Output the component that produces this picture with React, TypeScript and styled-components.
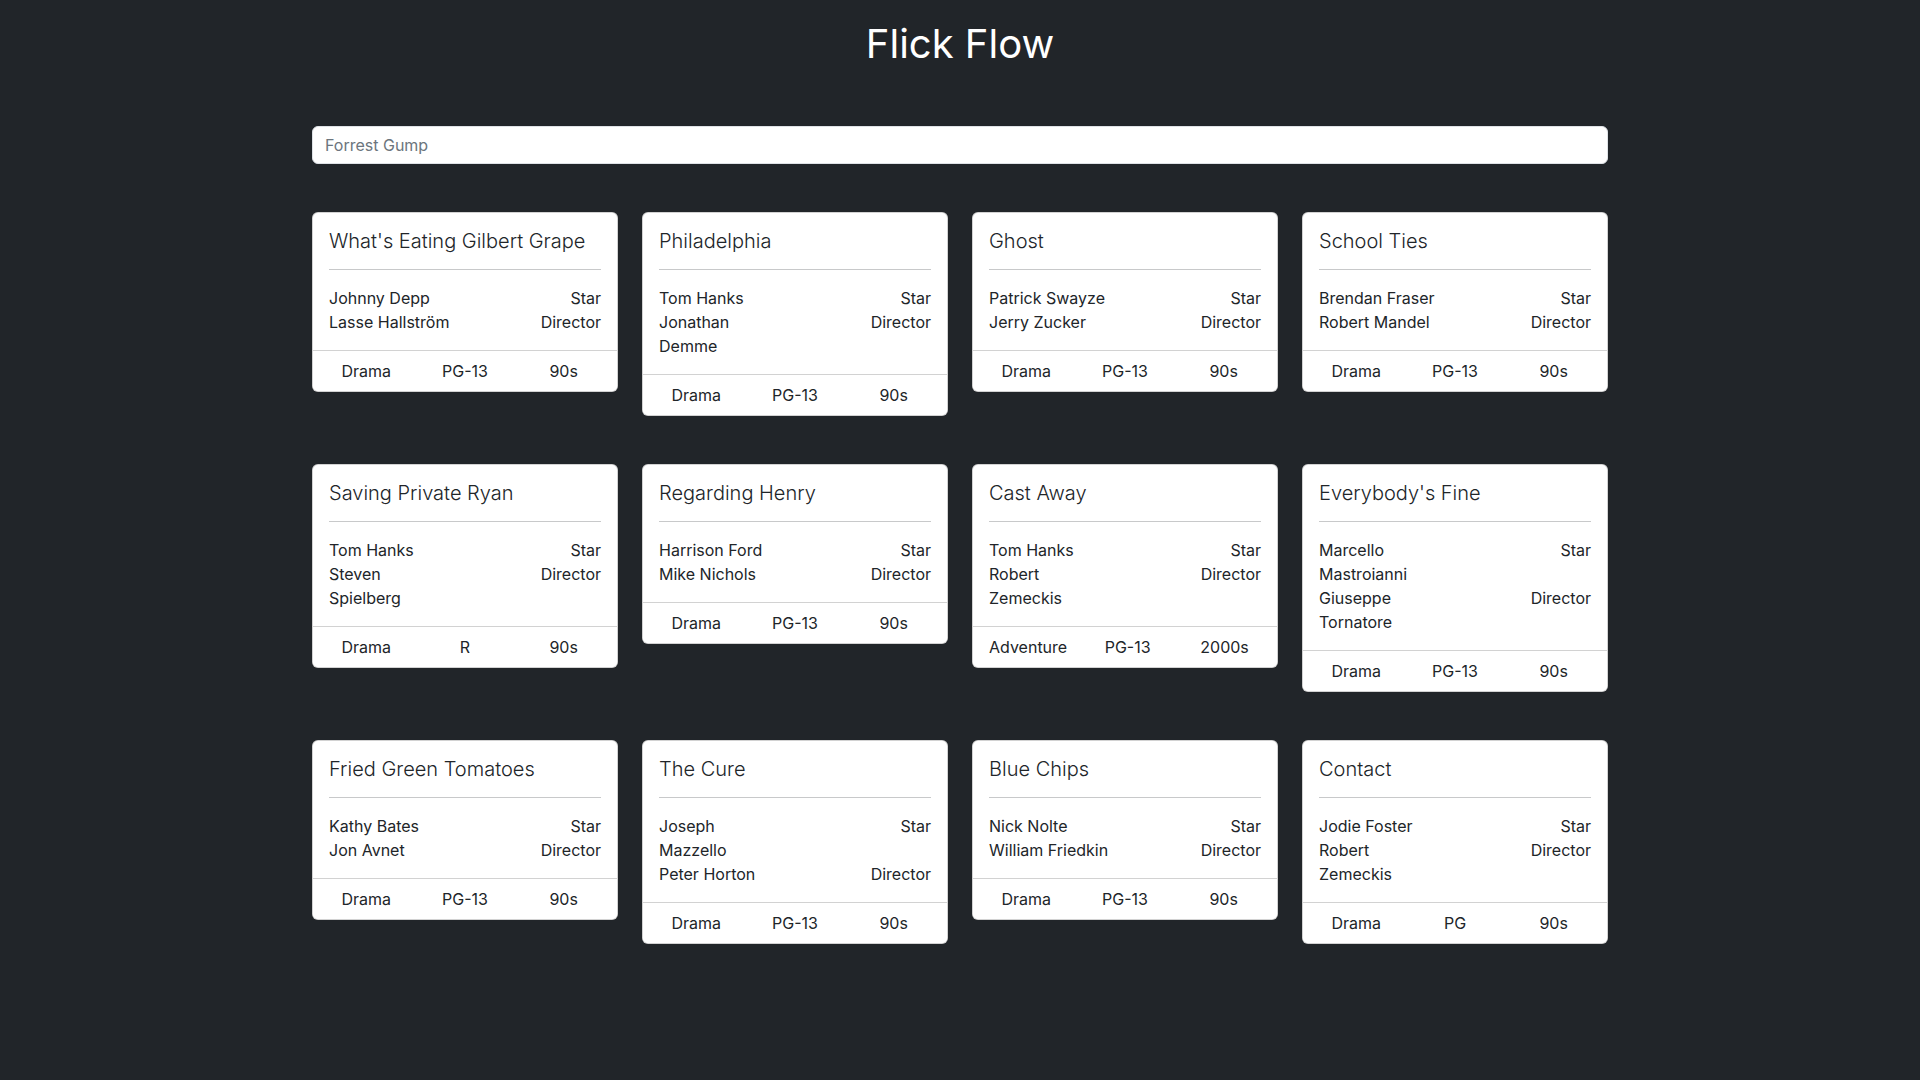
import React from "react";
import styled, { createGlobalStyle } from "styled-components";

const GlobalStyle = createGlobalStyle`
  *, *::before, *::after { box-sizing: border-box; }
  html, body { margin: 0; padding: 0; }
  body {
    background: #212529;
    font-family: Inter, "Noto Sans", "Liberation Sans", sans-serif;
    font-size: 16px;
    line-height: 1.5;
    color: #212529;
  }
`;

const Page = styled.div`
  min-height: 1080px;
  background: #212529;
`;

const Container = styled.main`
  width: 1320px;
  margin: 0 auto;
  padding: 20px 12px 48px;
`;

const Title = styled.h1`
  margin: 0 0 58px;
  text-align: center;
  color: #ffffff;
  font-size: 40px;
  font-weight: 400;
  line-height: 1.2;
`;

const Search = styled.input`
  display: block;
  width: 100%;
  height: 38px;
  padding: 6px 12px;
  font-family: inherit;
  font-size: 16px;
  line-height: 1.5;
  color: #212529;
  background: #ffffff;
  border: 1px solid #dee2e6;
  border-radius: 6px;
  outline: none;
  &::placeholder { color: #6c757d; opacity: 1; }
`;

const Grid = styled.section`
  margin-top: 48px;
  display: grid;
  grid-template-columns: repeat(4, 1fr);
  column-gap: 24px;
  row-gap: 48px;
  align-items: start;
`;

const Card = styled.article`
  background: #ffffff;
  border: 1px solid rgba(0, 0, 0, 0.175);
  border-radius: 6px;
  overflow: hidden;
`;

const CardBody = styled.div`
  padding: 16px;
`;

const CardTitle = styled.h5`
  margin: 0;
  font-size: 20px;
  font-weight: 300;
  line-height: 1.2;
  color: #212529;
`;

const Rule = styled.hr`
  margin: 16px 0;
  border: 0;
  border-top: 1px solid #c8c9ca;
`;

const PersonRow = styled.div`
  display: grid;
  grid-template-columns: 1fr 1fr;
  column-gap: 24px;
`;

const Name = styled.span`
  text-align: left;
`;

const Role = styled.span`
  text-align: right;
`;

const CardFooter = styled.div`
  padding: 8px 16px;
  border-top: 1px solid rgba(0, 0, 0, 0.175);
  background: #ffffff;
`;

const Tags = styled.div`
  display: grid;
  grid-template-columns: repeat(3, 1fr);
  margin: 0 -12px;
`;

const Tag = styled.span`
  text-align: center;
  padding: 0 12px;
`;

type Movie = {
  title: string;
  star: string;
  director: string;
  genre: string;
  rating: string;
  decade: string;
};

const movies: Movie[] = [
  { title: "What's Eating Gilbert Grape", star: "Johnny Depp", director: "Lasse Hallström", genre: "Drama", rating: "PG-13", decade: "90s" },
  { title: "Philadelphia", star: "Tom Hanks", director: "Jonathan Demme", genre: "Drama", rating: "PG-13", decade: "90s" },
  { title: "Ghost", star: "Patrick Swayze", director: "Jerry Zucker", genre: "Drama", rating: "PG-13", decade: "90s" },
  { title: "School Ties", star: "Brendan Fraser", director: "Robert Mandel", genre: "Drama", rating: "PG-13", decade: "90s" },
  { title: "Saving Private Ryan", star: "Tom Hanks", director: "Steven Spielberg", genre: "Drama", rating: "R", decade: "90s" },
  { title: "Regarding Henry", star: "Harrison Ford", director: "Mike Nichols", genre: "Drama", rating: "PG-13", decade: "90s" },
  { title: "Cast Away", star: "Tom Hanks", director: "Robert Zemeckis", genre: "Adventure", rating: "PG-13", decade: "2000s" },
  { title: "Everybody's Fine", star: "Marcello Mastroianni", director: "Giuseppe Tornatore", genre: "Drama", rating: "PG-13", decade: "90s" },
  { title: "Fried Green Tomatoes", star: "Kathy Bates", director: "Jon Avnet", genre: "Drama", rating: "PG-13", decade: "90s" },
  { title: "The Cure", star: "Joseph Mazzello", director: "Peter Horton", genre: "Drama", rating: "PG-13", decade: "90s" },
  { title: "Blue Chips", star: "Nick Nolte", director: "William Friedkin", genre: "Drama", rating: "PG-13", decade: "90s" },
  { title: "Contact", star: "Jodie Foster", director: "Robert Zemeckis", genre: "Drama", rating: "PG", decade: "90s" },
];

function MovieCard({ movie }: { movie: Movie }) {
  return (
    <Card>
      <CardBody>
        <CardTitle>{movie.title}</CardTitle>
        <Rule />
        <PersonRow>
          <Name>{movie.star}</Name>
          <Role>Star</Role>
        </PersonRow>
        <PersonRow>
          <Name>{movie.director}</Name>
          <Role>Director</Role>
        </PersonRow>
      </CardBody>
      <CardFooter>
        <Tags>
          <Tag>{movie.genre}</Tag>
          <Tag>{movie.rating}</Tag>
          <Tag>{movie.decade}</Tag>
        </Tags>
      </CardFooter>
    </Card>
  );
}

export default function App() {
  return (
    <Page>
      <GlobalStyle />
      <Container>
        <Title>Flick Flow</Title>
        <Search type="text" placeholder="Forrest Gump" />
        <Grid>
          {movies.map((m) => (
            <MovieCard key={m.title} movie={m} />
          ))}
        </Grid>
      </Container>
    </Page>
  );
}
